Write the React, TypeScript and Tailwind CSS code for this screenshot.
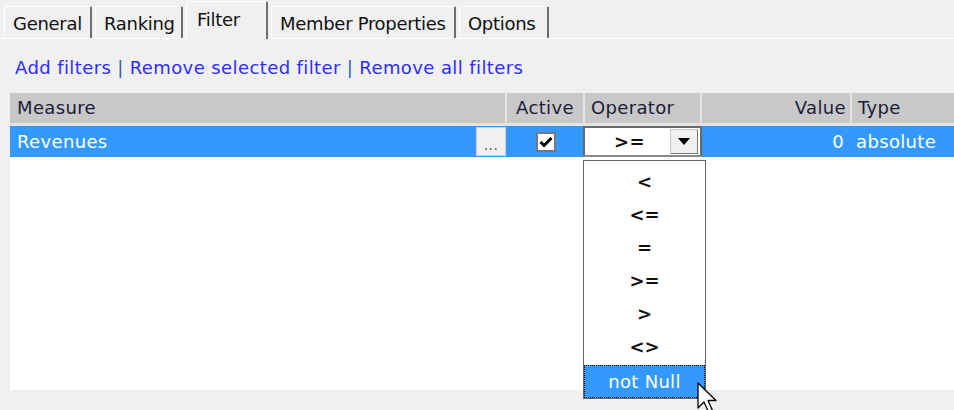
import React from 'react';

const font = { fontFamily: '"DejaVu Sans", Verdana, sans-serif' };

const tabs = [
  { label: 'General', w: 'w-[88px]' },
  { label: 'Ranking', w: 'w-[88px]' },
  { label: 'Filter', w: 'w-[82px]', active: true },
  { label: 'Member Properties', w: 'w-[185px]' },
  { label: 'Options', w: 'w-[90px]' },
];

const operators = ['<', '<=', '=', '>=', '>', '<>'];

const App = () => {
  return (
    <div
      className="relative w-[954px] h-[410px] overflow-hidden bg-[#f0f0f0] text-[18px] leading-[22px] text-[#111]"
      style={font}
    >
      {/* tab strip */}
      <div className="flex items-end gap-[3px] pl-[4px] h-[39px] border-b border-white tracking-[-0.3px]">
        {tabs.map((t) =>
          t.active ? (
            <div
              key={t.label}
              className={`${t.w} h-[38px] -mb-px flex items-start pt-[7px] pl-[10px] bg-[#f0f0f0] border-t border-l border-white border-r-2 border-r-[#6e6e6e] rounded-t-[2px]`}
            >
              {t.label}
            </div>
          ) : (
            <div
              key={t.label}
              className={`${t.w} h-[32px] flex items-center pl-[8px] pt-[3px] bg-[#f0f0f0] border-t border-l border-white border-r-2 border-r-[#6e6e6e] rounded-t-[2px]`}
            >
              {t.label}
            </div>
          )
        )}
      </div>

      {/* links */}
      <div className="mt-[18px] pl-[15px] flex gap-[6px] text-[#2d2dff] tracking-[0.4px]">
        <span>Add filters</span>
        <span className="text-[#2a64b0]">|</span>
        <span>Remove selected filter</span>
        <span className="text-[#2a64b0]">|</span>
        <span>Remove all filters</span>
      </div>

      {/* grid */}
      <div className="mt-[14px] ml-[10px] h-[297px] bg-white flex flex-col tracking-[0.35px]">
        <div className="flex h-[30px] gap-[2px] bg-[#e4e4e4] text-[#1c1c3a]">
          <div className="w-[495px] bg-[#c8c8c8] flex items-center pl-[7px]">Measure</div>
          <div className="w-[76px] bg-[#c8c8c8] flex items-center justify-center">Active</div>
          <div className="w-[115px] bg-[#c8c8c8] flex items-center pl-[6px]">Operator</div>
          <div className="w-[148px] bg-[#c8c8c8] flex items-center justify-end pr-[4px]">Value</div>
          <div className="flex-1 bg-[#c8c8c8] flex items-center pl-[6px]">Type</div>
        </div>
        <div className="h-[3px] bg-[#e4e4e4]" />
        <div className="flex h-[31px] bg-[#3399ff] text-white">
          <div className="w-[466px] flex items-center pl-[7px]">Revenues</div>
          <div className="w-[30px] my-[1px] bg-[#f0f0f0] border border-[#d0d0d0] flex items-end justify-center pb-[3px] text-[#555] text-[14px] leading-[14px]">
            ...
          </div>
          <div className="w-[77px] flex items-center justify-center pl-[2px]">
            <div className="w-[20px] h-[20px] bg-white border-2 border-[#777] flex items-center justify-center">
              <svg width="14" height="12" viewBox="0 0 14 12">
                <path d="M1.5 6 L5 9.5 L12.5 2" fill="none" stroke="#000" strokeWidth="3" />
              </svg>
            </div>
          </div>
          <div className="w-[119px] h-[31px] bg-white border-2 border-[#6a6a6a] border-b-[#8a8a8a] flex items-center">
            <span className="flex-1 text-center pl-[4px] text-[#111] font-bold">&gt;=</span>
            <div className="w-[28px] h-[25px] mr-[2px] bg-[#f0f0f0] border border-[#c8c8c8] border-r-[#777] border-b-[#777] flex items-center justify-center">
              <svg width="12" height="7" viewBox="0 0 12 7">
                <path d="M0 0 H12 L6 7 Z" fill="#000" />
              </svg>
            </div>
          </div>
          <div className="w-[148px] flex items-center justify-end pr-[6px]">0</div>
          <div className="flex-1 flex items-center pl-[6px]">absolute</div>
        </div>
        <div className="flex-1 bg-white" />
      </div>

      {/* open dropdown list */}
      <div className="absolute left-[583px] top-[160px] w-[123px] h-[239px] bg-white border border-[#646464] flex flex-col pt-[4px]">
        {operators.map((op) => (
          <div key={op} className="h-[33px] flex items-center justify-center text-[#111] font-bold">
            {op}
          </div>
        ))}
        <div className="h-[33px] mt-auto bg-[#3399ff] text-white border border-dotted border-black flex items-center justify-center tracking-[0.3px]">
          not Null
        </div>
      </div>

      {/* mouse pointer */}
      <svg
        className="absolute left-[697px] top-[382px]"
        width="26"
        height="36"
        viewBox="0 0 26 36"
      >
        <path
          d="M1 1 L1 26 L7 20 L11.5 30 L15.5 28.5 L11 18.5 L19 18.5 Z"
          fill="#fff"
          stroke="#000"
          strokeWidth="1.3"
          strokeLinejoin="round"
        />
      </svg>
    </div>
  );
};

export default App;
